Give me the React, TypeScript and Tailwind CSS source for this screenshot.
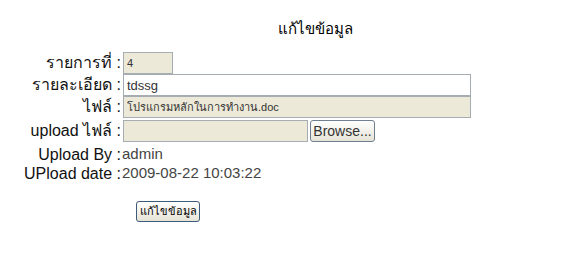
import React from "react";

const label = "w-[121px] shrink-0 text-right text-[16px] text-[#111] whitespace-nowrap";
const box = "h-[22px] border border-[#a5acb2] px-[3px] text-[#333] outline-none";

export default function App() {
  return (
    <div className="w-[580px] h-[264px] bg-white text-black font-['Liberation_Sans','Tahoma',sans-serif]">
      <div className="pt-[19px] pl-[278px] text-[15px] leading-[20px]">แก้ไขข้อมูล</div>

      <form className="mt-[13px] flex flex-col" onSubmit={e => e.preventDefault()}>
        <div className="flex items-center h-[22px]">
          <span className={label}>รายการที่ :</span>
          <input readOnly defaultValue="4" className={`${box} ml-[2px] w-[50px] bg-[#ece9d8] text-[11px]`} />
        </div>
        <div className="flex items-center h-[22px]">
          <span className={label}>รายละเอียด :</span>
          <input defaultValue="tdssg" className={`${box} ml-[2px] w-[348px] bg-white text-[13px]`} />
        </div>
        <div className="flex items-center h-[22px]">
          <span className={label}>ไฟล์ :</span>
          <input readOnly defaultValue="โปรแกรมหลักในการทำงาน.doc" className={`${box} ml-[2px] w-[348px] bg-[#ece9d8] text-[11px]`} />
        </div>
        <div className="flex items-center h-[23px] mt-[1px]">
          <span className={label}>upload ไฟล์ :</span>
          <input readOnly className={`${box} ml-[2px] w-[185px] bg-[#ece9d8] text-[11px]`} />
          <button type="button" className="ml-[2px] h-[22px] w-[65px] rounded-[3px] border border-[#6f7f8f] bg-gradient-to-b from-white to-[#e6e3d6] text-[14px] text-[#333]">
            Browse...
          </button>
        </div>
        <div className="flex items-center h-[19px] mt-[3px]">
          <span className={label}>Upload By :</span>
          <span className="pl-[1px] text-[15px] text-[#444]">admin</span>
        </div>
        <div className="flex items-center h-[19px]">
          <span className={label}>UPload date :</span>
          <span className="pl-[1px] text-[15px] text-[#444]">2009-08-22 10:03:22</span>
        </div>

        <div className="mt-[15px] pl-[136px]">
          <button type="submit" className="h-[21px] w-[64px] rounded-[3px] border border-[#3c5a7a] bg-gradient-to-b from-white to-[#e6e3d6] text-[11px] text-black">
            แก้ไขข้อมูล
          </button>
        </div>
      </form>
    </div>
  );
}
